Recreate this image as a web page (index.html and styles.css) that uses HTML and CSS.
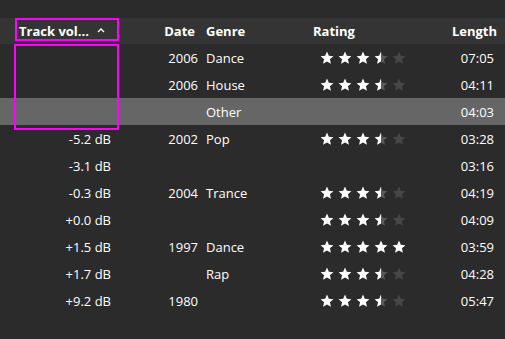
FILE: index.html
```html
<!DOCTYPE html>
<html lang="en">
<head>
  <meta charset="UTF-8" />
  <title>Tracks</title>
  <link rel="stylesheet" href="styles.css">
</head>
<body>
  <svg width="0" height="0" class="defs">
    <defs>
      <linearGradient id="halfFill" x1="0" x2="1" y1="0" y2="0">
        <stop offset="0.5" stop-color="#fff"/>
        <stop offset="0.5" stop-color="#5a5a5a"/>
      </linearGradient>
      <symbol id="star" viewBox="0 0 24 24">
        <polygon points="12,1 15.1,8.3 23,8.9 17,14.1 18.8,21.9 12,17.8 5.2,21.9 7,14.1 1,8.9 8.9,8.3"/>
      </symbol>
    </defs>
  </svg>

  <div class="topbar"></div>

  <div class="tracklist">
    <div class="row head">
      <div class="cell vol">
        <span class="label">Track vol...</span>
        <svg class="sort" width="8" height="5" viewBox="0 0 8 5"><path d="M1 4 L4 1 L7 4" fill="none" stroke="#fff" stroke-width="1.4"/></svg>
      </div>
      <div class="cell date">Date</div>
      <div class="cell genre">Genre</div>
      <div class="cell rating">Rating</div>
      <div class="cell length">Length</div>
    </div>

    <div class="row">
      <div class="cell vol"></div>
      <div class="cell date">2006</div>
      <div class="cell genre">Dance</div>
      <div class="cell rating"><span class="stars"><svg class="on"><use href="#star"/></svg><svg class="on"><use href="#star"/></svg><svg class="on"><use href="#star"/></svg><svg class="half"><use href="#star"/></svg><svg><use href="#star"/></svg></span></div>
      <div class="cell length">07:05</div>
    </div>
    <div class="row">
      <div class="cell vol"></div>
      <div class="cell date">2006</div>
      <div class="cell genre">House</div>
      <div class="cell rating"><span class="stars"><svg class="on"><use href="#star"/></svg><svg class="on"><use href="#star"/></svg><svg class="on"><use href="#star"/></svg><svg class="half"><use href="#star"/></svg><svg><use href="#star"/></svg></span></div>
      <div class="cell length">04:11</div>
    </div>
    <div class="row selected">
      <div class="cell vol"></div>
      <div class="cell date"></div>
      <div class="cell genre">Other</div>
      <div class="cell rating"></div>
      <div class="cell length">04:03</div>
    </div>
    <div class="row">
      <div class="cell vol">-5.2 dB</div>
      <div class="cell date">2002</div>
      <div class="cell genre">Pop</div>
      <div class="cell rating"><span class="stars"><svg class="on"><use href="#star"/></svg><svg class="on"><use href="#star"/></svg><svg class="on"><use href="#star"/></svg><svg class="half"><use href="#star"/></svg><svg><use href="#star"/></svg></span></div>
      <div class="cell length">03:28</div>
    </div>
    <div class="row">
      <div class="cell vol">-3.1 dB</div>
      <div class="cell date"></div>
      <div class="cell genre"></div>
      <div class="cell rating"></div>
      <div class="cell length">03:16</div>
    </div>
    <div class="row">
      <div class="cell vol">-0.3 dB</div>
      <div class="cell date">2004</div>
      <div class="cell genre">Trance</div>
      <div class="cell rating"><span class="stars"><svg class="on"><use href="#star"/></svg><svg class="on"><use href="#star"/></svg><svg class="on"><use href="#star"/></svg><svg class="half"><use href="#star"/></svg><svg><use href="#star"/></svg></span></div>
      <div class="cell length">04:19</div>
    </div>
    <div class="row">
      <div class="cell vol">+0.0 dB</div>
      <div class="cell date"></div>
      <div class="cell genre"></div>
      <div class="cell rating"><span class="stars"><svg class="on"><use href="#star"/></svg><svg class="on"><use href="#star"/></svg><svg class="on"><use href="#star"/></svg><svg class="half"><use href="#star"/></svg><svg><use href="#star"/></svg></span></div>
      <div class="cell length">04:09</div>
    </div>
    <div class="row">
      <div class="cell vol">+1.5 dB</div>
      <div class="cell date">1997</div>
      <div class="cell genre">Dance</div>
      <div class="cell rating"><span class="stars"><svg class="on"><use href="#star"/></svg><svg class="on"><use href="#star"/></svg><svg class="on"><use href="#star"/></svg><svg class="on"><use href="#star"/></svg><svg class="on"><use href="#star"/></svg></span></div>
      <div class="cell length">03:59</div>
    </div>
    <div class="row">
      <div class="cell vol">+1.7 dB</div>
      <div class="cell date"></div>
      <div class="cell genre">Rap</div>
      <div class="cell rating"><span class="stars"><svg class="on"><use href="#star"/></svg><svg class="on"><use href="#star"/></svg><svg class="on"><use href="#star"/></svg><svg class="half"><use href="#star"/></svg><svg><use href="#star"/></svg></span></div>
      <div class="cell length">04:28</div>
    </div>
    <div class="row">
      <div class="cell vol">+9.2 dB</div>
      <div class="cell date">1980</div>
      <div class="cell genre"></div>
      <div class="cell rating"><span class="stars"><svg class="on"><use href="#star"/></svg><svg class="on"><use href="#star"/></svg><svg class="on"><use href="#star"/></svg><svg class="half"><use href="#star"/></svg><svg><use href="#star"/></svg></span></div>
      <div class="cell length">05:47</div>
    </div>

    <!-- focus outlines over the first column -->
    <div class="focus focus-head"></div>
    <div class="focus focus-body"></div>
  </div>
</body>
</html>
```

FILE: styles.css
```css
body {
  margin: 0;
  background: #2b2b2b;
  color: #fff;
  font-family: 'Open Sans', 'Liberation Sans', sans-serif;
  font-size: 13px;
  overflow: hidden;
}

.defs {
  position: absolute;
}

.topbar {
  height: 18px;
  background: #2b2b2b;
}

.tracklist {
  position: relative;
}

.row {
  display: grid;
  grid-template-columns: 119px 83px 98px 120px 85px;
  height: 27px;
  align-items: center;
}

.row.head {
  height: 26px;
  background: #343434;
  font-weight: bold;
}

.row.selected {
  background: #666;
}

.cell {
  white-space: nowrap;
  overflow: hidden;
}

.cell.vol {
  text-align: right;
  padding-right: 8px;
}

.head .cell.vol {
  display: flex;
  align-items: center;
  justify-content: space-between;
  padding: 0 14px 0 19px;
}

.sort {
  margin-top: -1px;
}

.cell.date {
  text-align: right;
  padding-right: 4px;
}

.head .cell.date { padding-right: 7px; }

.cell.genre {
  padding-left: 4px;
}

.cell.rating {
  padding-left: 13px;
}

.stars {
  display: flex;
  gap: 4px;
  padding-left: 7px;
}

.stars svg {
  width: 14px;
  height: 14px;
  fill: #474747;
}

.stars svg.on { fill: #fff; }
.stars svg.half { fill: url(#halfFill); }

.cell.length {
  text-align: right;
  padding-right: 11px;
}

.head .cell.length { padding-right: 8px; }

.focus {
  position: absolute;
  border: 2px solid #ff00ff;
  box-sizing: border-box;
}

.focus-head {
  left: 15px;
  top: 0;
  width: 104px;
  height: 23px;
}

.focus-body {
  left: 14px;
  top: 26px;
  width: 105px;
  height: 86px;
}
```
